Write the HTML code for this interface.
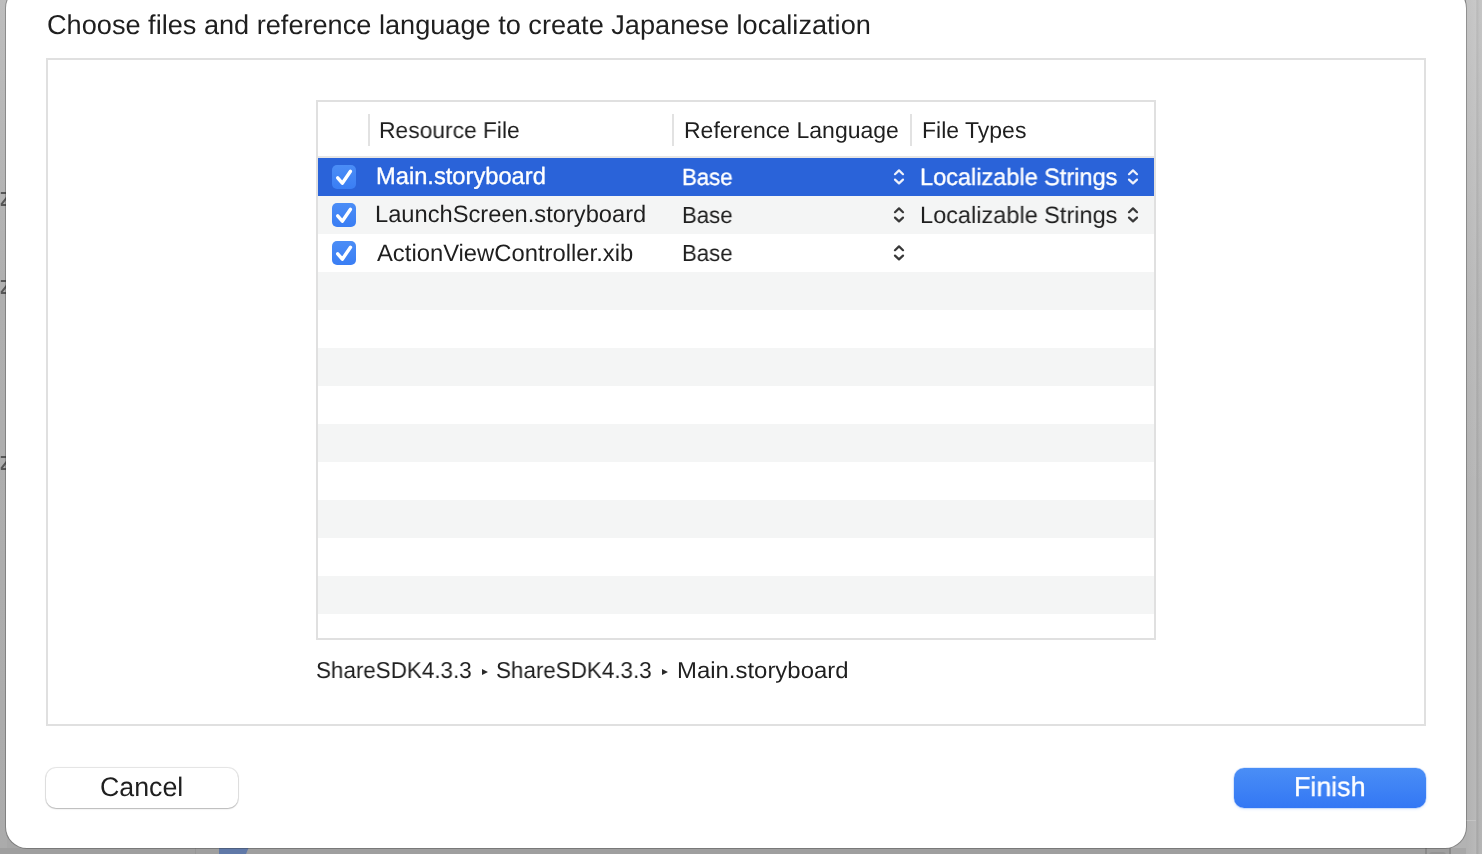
<!DOCTYPE html>
<html><head><meta charset="utf-8">
<style>
html,body{margin:0;padding:0;}
body{width:1482px;height:854px;overflow:hidden;position:relative;background:#a7a7a7;font-family:"Liberation Sans",sans-serif;}
.a{position:absolute;}
.t{position:absolute;white-space:nowrap;line-height:1;color:#1f1f1f;transform-origin:0 0;}
.dlg{position:absolute;left:6px;top:-13px;width:1460px;height:861px;border-radius:21px;background:#fff;box-shadow:0 0 0 1px rgba(40,40,40,0.32);}
.box{position:absolute;left:46px;top:58px;width:1380px;height:668px;border:2px solid #e0e0e0;box-sizing:border-box;}
.tbl{position:absolute;left:316px;top:100px;width:840px;height:540px;border:2px solid #e0e0e0;box-sizing:border-box;background:#fff;}
.sep{position:absolute;top:114px;width:2px;height:32px;background:#e2e2e2;}
.row{position:absolute;left:318px;width:836px;height:38px;}
.g{background:#f4f5f5;}
.sel{background:#2a63d9;}
.cb{position:absolute;left:332px;width:24px;height:24px;border-radius:5px;background:linear-gradient(#4b8df6,#3a7ef4);}
.cb svg{position:absolute;left:0;top:0;}
.t{will-change:transform;text-rendering:geometricPrecision;}
.w{color:#fff;-webkit-text-stroke:0.35px #fff;}
.btn{position:absolute;border-radius:10px;box-sizing:border-box;}
</style></head><body>
<div class="a" style="left:0;top:0;width:7px;height:854px;background:linear-gradient(180deg,#bdbdbd 0,#afafaf 300px,#ababab 854px)"></div>
<div class="a" style="left:0;top:848px;width:1450px;height:6px;background:#9f9f9f"></div>
<div class="a" style="left:195px;top:848px;width:1px;height:6px;background:#969696"></div>
<div class="a" style="left:219px;top:848px;width:30px;height:6px;background:#6079a8;clip-path:polygon(0 0,29.5px 0,27px 6px,0 6px)"></div>
<div class="a" style="left:1425px;top:848px;width:2px;height:6px;background:#8a8a8a"></div>
<div class="a" style="left:1449px;top:848px;width:2px;height:6px;background:#8a8a8a"></div>
<div class="a" style="left:1429px;top:852px;width:17px;height:6px;background:#939393;border-radius:3px"></div>
<div class="a" style="left:1436px;top:800px;width:30px;height:48px;background:#b3b3b3"></div>
<div class="a" style="left:1466px;top:0;width:16px;height:854px;background:linear-gradient(90deg,#b2b2b2 0px,#b7b7b7 8px,#b9b9b9 9.5px,#a9a9a9 10.8px,#a8a8a8 11.8px,#b3b3b3 13px,#b4b4b4 16px)"></div>
<div class="a" style="left:1466px;top:820px;width:10px;height:1px;background:#c4c4c4"></div>
<div class="a" style="left:1466px;top:0;width:16px;height:854px;background:linear-gradient(180deg,rgba(255,255,255,0.22) 0,rgba(255,255,255,0.06) 300px,rgba(255,255,255,0) 500px)"></div>
<svg class="a" style="left:0;top:192px" width="12" height="16"><path d="M0.8 1 H10 M10 1.4 L1.2 12.6 M0.8 13 H10" stroke="#575757" stroke-width="2" fill="none"/></svg>
<svg class="a" style="left:0;top:280px" width="12" height="16"><path d="M0.8 1 H10 M10 1.4 L1.2 12.6 M0.8 13 H10" stroke="#575757" stroke-width="2" fill="none"/></svg>
<svg class="a" style="left:0;top:456px" width="12" height="16"><path d="M0.8 1 H10 M10 1.4 L1.2 12.6 M0.8 13 H10" stroke="#575757" stroke-width="2" fill="none"/></svg>
<div class="dlg"></div>

<div class="t" style="left:46.5px;top:10.81px;font-size:27.15px">Choose files and reference language to create Japanese localization</div>

<div class="box"></div>
<div class="tbl"></div>
<div class="sep" style="left:368px"></div>
<div class="sep" style="left:672px"></div>
<div class="sep" style="left:910px"></div>
<div class="a" style="left:318px;top:156px;width:836px;height:2px;background:#e8e6e4"></div>

<div class="t" style="left:379px;top:119.43px;font-size:23px;transform:scaleX(0.992)">Resource File</div>
<div class="t" style="left:684px;top:119.43px;font-size:23px">Reference Language</div>
<div class="t" style="left:922px;top:119.43px;font-size:23px">File Types</div>

<div class="row sel" style="top:158px"></div>
<div class="row g" style="top:196px"></div>
<div class="row g" style="top:272px"></div>
<div class="row g" style="top:348px"></div>
<div class="row g" style="top:424px"></div>
<div class="row g" style="top:500px"></div>
<div class="row g" style="top:576px"></div>

<div class="cb" style="top:165px"><svg width="24" height="24"><path d="M5.7 12.8 L10.3 18.2 L18.5 6.3" fill="none" stroke="#fff" stroke-width="3.4" stroke-linecap="round" stroke-linejoin="round"/></svg></div>
<div class="cb" style="top:203px"><svg width="24" height="24"><path d="M5.7 12.8 L10.3 18.2 L18.5 6.3" fill="none" stroke="#fff" stroke-width="3.4" stroke-linecap="round" stroke-linejoin="round"/></svg></div>
<div class="cb" style="top:241px"><svg width="24" height="24"><path d="M5.7 12.8 L10.3 18.2 L18.5 6.3" fill="none" stroke="#fff" stroke-width="3.4" stroke-linecap="round" stroke-linejoin="round"/></svg></div>

<div class="t w" style="left:376px;top:166.38px;font-size:23.7px">Main.storyboard</div>
<div class="t w" style="left:682px;top:165.64px;font-size:23.4px;transform:scaleX(0.95)">Base</div>
<div class="t w" style="left:920.1px;top:167.49px;font-size:23.65px;transform:scaleX(0.995)">Localizable Strings</div>
<div class="t" style="left:375px;top:204.38px;font-size:23.7px">LaunchScreen.storyboard</div>
<div class="t" style="left:682px;top:203.64px;font-size:23.4px;transform:scaleX(0.95)">Base</div>
<div class="t" style="left:920.1px;top:205.49px;font-size:23.65px;transform:scaleX(0.995)">Localizable Strings</div>
<div class="t" style="left:376.8px;top:242.38px;font-size:23.8px">ActionViewController.xib</div>
<div class="t" style="left:682px;top:241.64px;font-size:23.4px;transform:scaleX(0.95)">Base</div>

<svg class="a" style="left:0;top:0" width="1482" height="854">
 <g fill="none" stroke-width="2.2" stroke-linecap="round" stroke-linejoin="round">
  <path d="M895 174.2 L899 170.4 L903 174.2 M895 179.6 L899 183.4 L903 179.6" stroke="#eef1fb"/>
  <path d="M1129 174.2 L1133 170.4 L1137 174.2 M1129 179.6 L1133 183.4 L1137 179.6" stroke="#eef1fb"/>
  <path d="M895 212.2 L899 208.4 L903 212.2 M895 217.6 L899 221.4 L903 217.6" stroke="#383838"/>
  <path d="M1129 212.2 L1133 208.4 L1137 212.2 M1129 217.6 L1133 221.4 L1137 217.6" stroke="#383838"/>
  <path d="M895 250.2 L899 246.4 L903 250.2 M895 255.6 L899 259.4 L903 255.6" stroke="#383838"/>
 </g>
 <path d="M482 669 L488 672 L482 675 Z M662 669 L668 672 L662 675 Z" fill="#2a2a2a"/>
</svg>

<div class="t" style="left:316px;top:659.33px;font-size:23px;transform:scaleX(0.974)">ShareSDK4.3.3</div>
<div class="t" style="left:496.4px;top:659.33px;font-size:23px;transform:scaleX(0.974)">ShareSDK4.3.3</div>
<div class="t" style="left:677px;top:659.33px;font-size:23px;transform:scaleX(1.04)">Main.storyboard</div>

<div class="btn" style="left:46.3px;top:768px;width:191.4px;height:40px;background:#fff;box-shadow:0 0 0 1px rgba(0,0,0,0.085),0 1px 1.5px rgba(0,0,0,0.2),0 0 3px rgba(0,0,0,0.06)"></div>
<div class="t" style="left:100.4px;top:774.14px;font-size:26.76px">Cancel</div>
<div class="btn" style="left:1234px;top:768px;width:192px;height:40px;background:linear-gradient(#4a8ef6,#3377f4);box-shadow:0 0 0 0.5px rgba(50,120,240,0.25),0 1px 3px rgba(50,120,240,0.22)"></div>
<div class="t w" style="left:1294px;top:772.77px;font-size:27.2px;transform:scaleX(0.985)">Finish</div>

</body></html>
